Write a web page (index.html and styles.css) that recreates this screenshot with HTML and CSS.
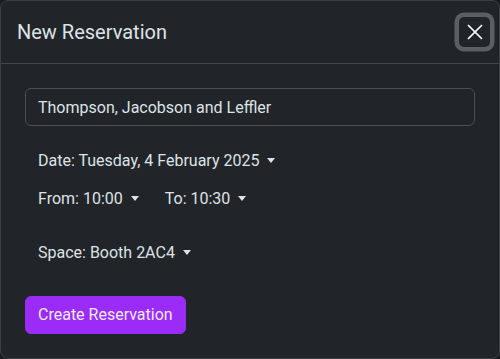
FILE: index.html
```html
<!DOCTYPE html>
<html lang="en">
<head>
<meta charset="utf-8">
<title>New Reservation</title>
<link rel="stylesheet" href="styles.css">
</head>
<body>
<div class="modal">
  <div class="modal-header">
    <h5 class="modal-title">New Reservation</h5>
    <button class="btn-close" type="button" aria-label="Close">
      <svg viewBox="0 0 16 16" width="16" height="16"><path d="M1 1 L15 15 M15 1 L1 15" stroke="#fff" stroke-width="1.7" fill="none"/></svg>
    </button>
  </div>
  <div class="modal-body">
    <input class="form-control" type="text" value="Thompson, Jacobson and Leffler">
    <div class="row-date">
      <button class="dd-btn" type="button">Date: Tuesday, 4 February 2025<span class="caret"></span></button>
    </div>
    <div class="row-time">
      <button class="dd-btn" type="button">From: 10:00<span class="caret"></span></button>
      <button class="dd-btn" type="button">To: 10:30<span class="caret"></span></button>
    </div>
    <div class="row-space">
      <button class="dd-btn" type="button">Space: Booth 2AC4<span class="caret"></span></button>
    </div>
    <div class="row-submit">
      <button class="btn-primary" type="button">Create Reservation</button>
    </div>
  </div>
</div>
</body>
</html>
```
FILE: styles.css
```css
* { box-sizing: border-box; }
html, body { margin: 0; padding: 0; }
body {
  background: #1a1d20;
  font-family: Roboto, "Liberation Sans", sans-serif;
  color: #dee2e6;
  width: 500px;
  height: 359px;
  overflow: hidden;
}
.modal {
  width: 500px;
  height: 359px;
  background: #212529;
  border: 1px solid #3b3f44;
  border-radius: 8px;
  display: flex;
  flex-direction: column;
}
.modal-header {
  height: 63px;
  display: flex;
  align-items: center;
  justify-content: space-between;
  padding: 0 5px 0 16px;
  border-bottom: 1px solid #43474c;
}
.modal-title {
  margin: 0;
  font-size: 20px;
  font-weight: 400;
  line-height: 30px;
  color: #dee2e6;
}
.btn-close {
  width: 31px;
  height: 30px;
  margin-right: 4px;
  border: none;
  border-radius: 5px;
  background: transparent;
  box-shadow: 0 0 0 4.5px #5b5f64;
  display: flex;
  align-items: center;
  justify-content: center;
  padding: 0;
}
.btn-close svg { display: block; width: 16px; height: 16px; }
.modal-body {
  padding: 24px 24px;
  display: flex;
  flex-direction: column;
}
.form-control {
  display: block;
  width: 100%;
  height: 38px;
  padding: 6px 12px;
  font-family: inherit;
  font-size: 16px;
  line-height: 24px;
  color: #dee2e6;
  background: #212529;
  border: 1px solid #4a4f54;
  border-radius: 6px;
  outline: none;
}
.row-date { margin-top: 16px; display: flex; }
.row-time { display: flex; }
.row-space { margin-top: 16px; display: flex; }
.row-submit { margin-top: 24px; display: flex; }
.dd-btn {
  height: 38px;
  padding: 6px 12px;
  font-family: inherit;
  font-size: 16px;
  line-height: 24px;
  color: #dee2e6;
  background: transparent;
  border: 1px solid transparent;
  border-radius: 6px;
  display: inline-flex;
  align-items: center;
}
.caret {
  display: inline-block;
  margin-left: 8px;
  width: 0;
  height: 0;
  border-top: 5px solid #dee2e6;
  border-left: 4.5px solid transparent;
  border-right: 4.5px solid transparent;
  position: relative;
  top: -1px;
}
.btn-primary {
  height: 38px;
  padding: 6px 12px;
  font-family: inherit;
  font-size: 16px;
  line-height: 24px;
  color: #f3e9ff;
  background: #9b2cf8;
  border: 1px solid #9b2cf8;
  border-radius: 6px;
}
```
